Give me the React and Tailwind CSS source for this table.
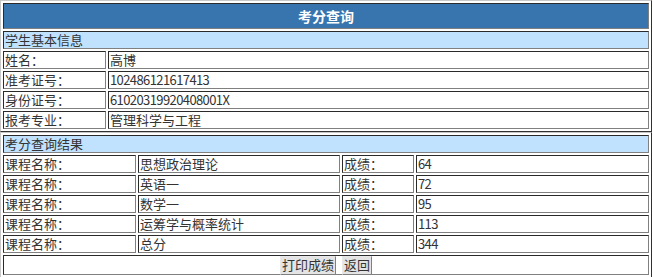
import React from 'react';

const student = [
    ['姓名：', '高博'],
    ['准考证号：', '102486121617413'],
    ['身份证号：', '61020319920408001X'],
    ['报考专业：', '管理科学与工程'],
];

const scores = [
    ['思想政治理论', '64'],
    ['英语一', '72'],
    ['数学一', '95'],
    ['运筹学与概率统计', '113'],
    ['总分', '344'],
];

const cell = 'h-[18px] border border-t-[#2a2a2a] border-l-[#2a2a2a] border-r-[#808080] border-b-[#808080] px-px leading-[16px] whitespace-nowrap overflow-hidden';
const box = 'border border-t-[#c8c8c8] border-l-[#c8c8c8] border-r-[#303030] border-b-[#303030] p-[2px] flex flex-col gap-[2px]';
const btn = 'h-[19px] px-[1px] border border-t-[#e8e8e8] border-l-[#e8e8e8] border-r-[#808080] border-b-[#808080] bg-[#e4e4e4] leading-[16px] text-[13px] text-[#333]';

const isNum = (s) => /^[0-9X]+$/.test(s);

const App = () => {
    return (
        <div
            className="w-[652px] text-[13px] text-[#333]"
            style={{ fontFamily: '"Noto Sans CJK SC", "Liberation Sans", sans-serif' }}
        >
            <div className={box}>
                <div className="h-[26px] border border-t-[#2a2a2a] border-l-[#2a2a2a] border-r-[#808080] border-b-[#808080] bg-[#3875ae] flex items-center justify-center font-bold text-white text-[14px]">
                    考分查询
                </div>
                <div className={`${cell} bg-[#c0e2fe]`}>学生基本信息</div>
                {student.map(([label, value]) => (
                    <div key={label} className="flex gap-[2px]">
                        <div className={`${cell} bg-white w-[103px]`}>{label}</div>
                        <div className={`${cell} bg-white flex-1 ${isNum(value) ? 'tracking-[-0.6px]' : ''}`}>{value}</div>
                    </div>
                ))}
            </div>
            <div className={box}>
                <div className={`${cell} bg-[#c0e2fe]`}>考分查询结果</div>
                {scores.map(([name, score]) => (
                    <div key={name} className="flex gap-[2px]">
                        <div className={`${cell} bg-white w-[133px]`}>课程名称：</div>
                        <div className={`${cell} bg-white w-[202px]`}>{name}</div>
                        <div className={`${cell} bg-white w-[72px]`}>成绩：</div>
                        <div className={`${cell} bg-white flex-1 tracking-[-0.6px]`}>{score}</div>
                    </div>
                ))}
                <div className="h-[20px] border border-t-[#2a2a2a] border-l-[#2a2a2a] border-r-[#808080] border-b-[#808080] bg-white flex items-center justify-center gap-[6px]">
                    <button className={btn}>打印成绩</button>
                    <button className={btn}>返回</button>
                </div>
            </div>
        </div>
    );
};

export default App;
